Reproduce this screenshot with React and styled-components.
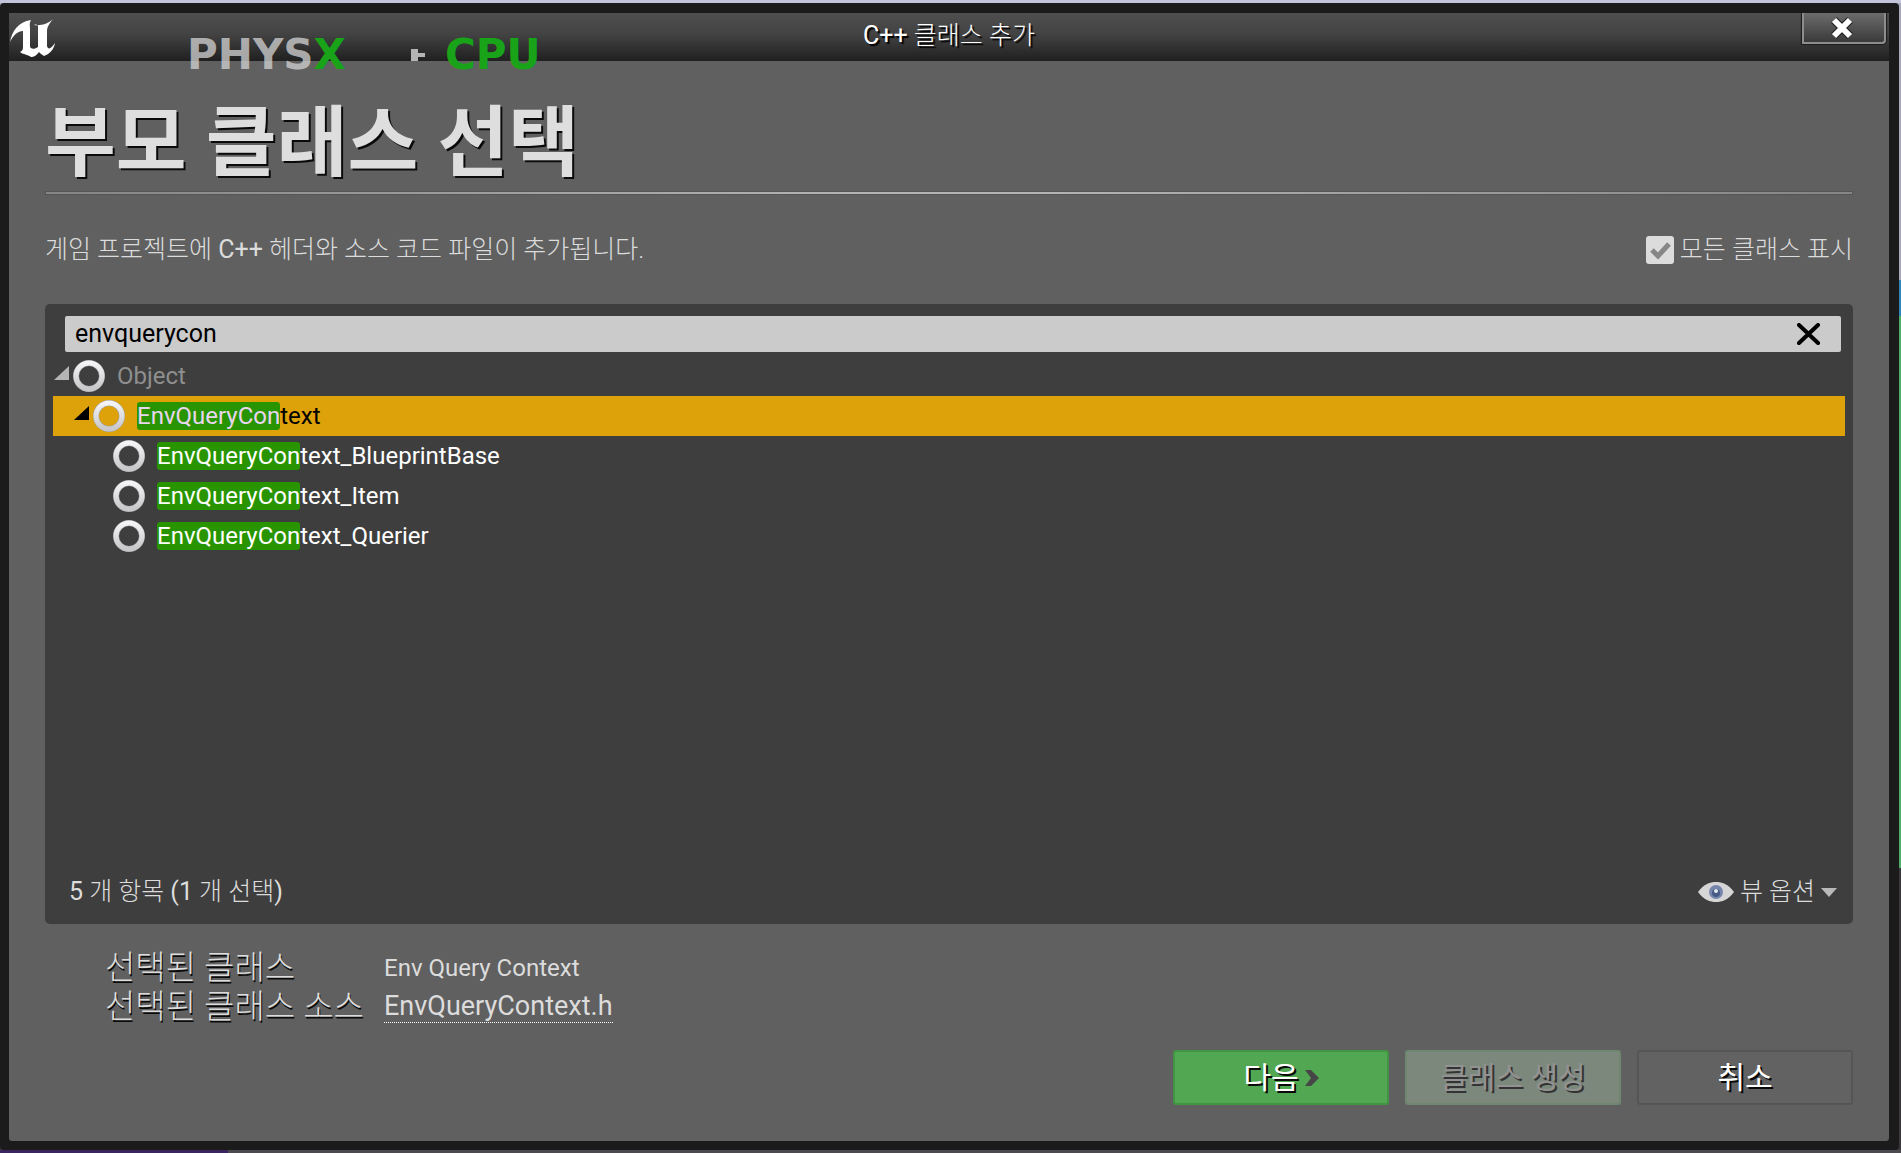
import React, { useState } from "react";
import styled, { createGlobalStyle, css } from "styled-components";

const GlobalStyle = createGlobalStyle`
  * {
    box-sizing: border-box;
  }
  body {
    margin: 0;
    background: #4a484c;
    color: #dcdcdc;
    font-family: Roboto, "Noto Sans CJK KR", sans-serif;
    font-size: 24px;
    font-weight: 400;
    line-height: 28px;
  }
  button, input {
    font: inherit;
    color: inherit;
  }
`;

const Desktop = styled.div`
  min-height: 100vh;
  display: flex;
  padding: 3px 2px 3px 0;
  background:
    linear-gradient(90deg, #3b2560 0 12%, #4c4a4e 12%) bottom / 100% 3px no-repeat,
    linear-gradient(#c3c3da 0 3px, #a9a9bc 3px 280px, #2f86b8 280px 316px, #4fae68 316px 868px, #3a383c 868px);
`;

const Frame = styled.div`
  flex: 1;
  display: flex;
  flex-direction: column;
  padding: 10px 10px 9px 9px;
  border-radius: 4px;
  background: #1b1b1b;
`;

const TitleBar = styled.header`
  height: 48px;
  display: grid;
  grid-template-columns: 1fr auto 1fr;
  background: linear-gradient(#4f4f4f, #424242 45%, #202020);
`;

const TitleText = styled.div`
  align-self: center;
  padding-bottom: 2px;
  color: #fff;
  font-size: 25px;
  font-weight: 300;
  text-shadow: 2px 2px 1px #000;
`;

/* latin runs read heavier than the light hangul around them */
const Latin = styled.span`
  font-weight: 400;
`;

const Logo = styled.svg`
  width: 48px;
  height: 48px;
`;

const CloseButton = styled.button`
  justify-self: end;
  display: flex;
  align-items: center;
  justify-content: center;
  width: 84px;
  height: 31px;
  margin-right: 3px;
  padding: 0 4px 0 0;
  border: 2px solid #8d8d8d;
  border-top: 0;
  border-radius: 0 0 4px 0;
  background: linear-gradient(#6c6c6c, #3a3a3a);
  box-shadow: 0 0 1px 1px #1c1c1c;
`;

/* renderer stats that float over the dialog */
const Overlay = styled.div`
  position: absolute;
  top: 31px;
  left: 187px;
  display: grid;
  grid-template-columns: 224px 34px auto;
  align-items: center;
  font: bold 42px/48px "DejaVu Sans", sans-serif;
  color: rgba(205, 205, 205, 0.8);
  pointer-events: none;
`;

const Green = styled.span`
  color: #18a318;
`;

const Content = styled.main`
  flex: 1;
  display: flex;
  flex-direction: column;
  padding: 36px;
  background: #606060;
  border-radius: 0 0 3px 3px;
`;

const Heading = styled.h1`
  margin: 0;
  font-size: 77px;
  font-weight: 700;
  line-height: 94px;
  color: #dedede;
  text-shadow: 2px 2px 0 #0a0a0a;
`;

const Rule = styled.hr`
  width: 100%;
  height: 4px;
  margin: 0;
  border: 1px solid #555;
  background: linear-gradient(90deg, #858585, #b4b4b4 45%, #b4b4b4 55%, #858585);
`;

const Intro = styled.div`
  display: flex;
  align-items: center;
  justify-content: space-between;
  height: 109px;
  font-size: 25px;
  font-weight: 300;
`;

const CheckLabel = styled.label`
  display: flex;
  align-items: center;
  gap: 6px;
`;

const CheckBox = styled.input`
  appearance: none;
  width: 28px;
  height: 28px;
  margin: 0;
  border-radius: 3px;
  background: #dcdcdc;
`;

const CheckWrap = styled.span`
  position: relative;
  display: flex;

  svg {
    position: absolute;
    inset: 0;
    pointer-events: none;
  }
`;

const Panel = styled.section`
  flex: 1;
  display: flex;
  flex-direction: column;
  padding: 12px 8px;
  border-radius: 5px;
  background: #3e3e3e;
`;

const SearchBar = styled.div`
  display: flex;
  align-items: center;
  height: 36px;
  margin: 0 4px 4px 12px;
  padding: 0 20px 0 10px;
  border-radius: 2px;
  background: #cbcbcb;
  color: #000;
  font-size: 25px;
`;

const SearchInput = styled.input`
  flex: 1;
  padding: 0;
  border: 0;
  outline: 0;
  background: none;
`;

const IconButton = styled.button`
  display: flex;
  align-items: center;
  padding: 0;
  border: 0;
  background: none;
`;

const Tree = styled.ul`
  flex: 1;
  margin: 0;
  padding: 0;
  list-style: none;
`;

const Row = styled.li`
  display: flex;
  align-items: center;
  height: 40px;
  padding-left: ${({ $depth }) => $depth * 20}px;
  color: ${({ $dim }) => ($dim ? "#8f8f8f" : "#fff")};

  ${({ $selected }) =>
    $selected &&
    css`
      background: #dda20a;
      color: #000;
    `}
`;

const Arrow = styled.svg`
  width: 20px;
  height: 20px;
  margin-bottom: 6px;
  fill: ${({ $dark }) => ($dark ? "#000" : "#b5b5b5")};
`;

const Mark = styled.mark`
  padding: 0;
  border-radius: 3px;
  background: #289400;
  color: ${({ $selected }) => ($selected ? "#e8d6f0" : "#fff")};
`;

const ClassName = styled.span`
  margin-left: 12px;
`;

const PanelFooter = styled.footer`
  display: flex;
  align-items: center;
  justify-content: space-between;
  height: 40px;
  padding: 0 8px 0 16px;
  font-size: 25px;
  font-weight: 300;
`;

const ViewButton = styled(IconButton)`
  gap: 6px;
`;

const Details = styled.dl`
  display: grid;
  grid-template-columns: 279px 1fr;
  grid-auto-rows: 39px;
  align-items: center;
  margin: 24px 0 24px 60px;
`;

const Term = styled.dt`
  font-size: 33px;
  font-weight: 300;
  line-height: 39px;
  text-shadow: 1px 2px 0 #0a0a0a;
`;

const Value = styled.dd`
  margin: 0;
`;

const SourceLink = styled.a`
  border-bottom: 1px dotted #fff;
  color: inherit;
  font-size: 27px;
  text-decoration: none;
`;

const Actions = styled.div`
  display: flex;
  justify-content: flex-end;
  gap: 16px;
`;

const ActionButton = styled.button`
  display: flex;
  align-items: center;
  justify-content: center;
  gap: 6px;
  width: 216px;
  height: 55px;
  padding: 0;
  border: 2px solid #555;
  border-radius: 3px;
  background: #626262;
  color: #fff;
  font-size: 30px;
  text-shadow: 2px 2px 0 #0a0a0a;

  ${({ $green }) =>
    $green &&
    css`
      border-color: #419443;
      background: #52a852;
    `}

  &:disabled {
    border-color: #6f8770;
    background: #7b887b;
    color: #929292;
    text-shadow: 2px 2px 0 #333;
  }
`;

const CLASSES = [
  { name: "Object", depth: 0, open: true, dim: true },
  { name: "EnvQueryContext", depth: 1, open: true },
  { name: "EnvQueryContext_BlueprintBase", depth: 2 },
  { name: "EnvQueryContext_Item", depth: 2 },
  { name: "EnvQueryContext_Querier", depth: 2 },
];

function Highlighted({ name, query, selected }) {
  const at = query ? name.toLowerCase().indexOf(query.toLowerCase()) : -1;
  if (at < 0) return name;
  const end = at + query.length;

  return (
    <>
      {name.slice(0, at)}
      <Mark $selected={selected}>{name.slice(at, end)}</Mark>
      {name.slice(end)}
    </>
  );
}

function Ring() {
  return (
    <svg width="32" height="32" viewBox="0 0 32 32">
      <defs>
        <linearGradient id="ring" x1="0" y1="0" x2="0" y2="1">
          <stop offset="0" stopColor="#f4f4f6" />
          <stop offset="1" stopColor="#c8c8ca" />
        </linearGradient>
      </defs>
      <circle cx="16" cy="16" r="13" fill="none" stroke="#a2a2a4" strokeWidth="6" />
      <circle cx="16" cy="16" r="13" fill="none" stroke="url(#ring)" strokeWidth="5" />
    </svg>
  );
}

function ClassRow({ item, query, selected, onSelect }) {
  return (
    <Row $depth={item.depth} $dim={item.dim} $selected={selected} onClick={onSelect}>
      <Arrow viewBox="0 0 20 20" $dark={selected}>
        {item.open && <path d="M1 17 16 3v14z" />}
      </Arrow>
      <Ring />
      <ClassName>
        <Highlighted name={item.name} query={query} selected={selected} />
      </ClassName>
    </Row>
  );
}

function App() {
  const [query, setQuery] = useState("envquerycon");
  const [selected, setSelected] = useState("EnvQueryContext");
  const [showAll, setShowAll] = useState(true);

  return (
    <Desktop>
      <GlobalStyle />
      <Frame>
        <TitleBar>
          <Logo viewBox="0 0 48 48">
            <path
              fill="#fff"
              d="M1 29C3 18 9 9 22 7c-2 3-1 6-1 9v17c0 3 4 4 8 1V14c0-2-1-3-4-2 8 1 15-2 19-6-4 5-6 8-6 12v15c1 4 4 3 8-3-1 6-5 11-11 13-2-1-4-3-5-4-2 3-5 5-8 5-4-3-7-2-11-5 2-1 3-2 3-5V18C8 18 4 23 1 29z"
            />
          </Logo>
          <TitleText>
            <Latin>C++</Latin> 클래스 추가
          </TitleText>
          <CloseButton aria-label="닫기">
            <svg width="26" height="24" viewBox="0 0 26 24">
              <path d="M5 4l16 16M21 4 5 20" stroke="#1c1c1c" strokeWidth="8" />
              <path d="M5 4l16 16M21 4 5 20" stroke="#fff" strokeWidth="6" />
            </svg>
          </CloseButton>
        </TitleBar>
        <Content>
          <Heading>부모 클래스 선택</Heading>
          <Rule />
          <Intro>
            <span>
              게임 프로젝트에 <Latin>C++</Latin> 헤더와 소스 코드 파일이 추가됩니다.
            </span>
            <CheckLabel>
              <CheckWrap>
                <CheckBox type="checkbox" checked={showAll} onChange={(e) => setShowAll(e.target.checked)} />
                {showAll && (
                  <svg width="28" height="28" viewBox="0 0 28 28">
                    <path d="M6 14l6 6L23 8" fill="none" stroke="#868686" strokeWidth="5" />
                  </svg>
                )}
              </CheckWrap>
              모든 클래스 표시
            </CheckLabel>
          </Intro>
          <Panel>
            <SearchBar>
              <SearchInput
                type="text"
                aria-label="검색"
                value={query}
                onChange={(e) => setQuery(e.target.value)}
              />
              <IconButton aria-label="지우기" onClick={() => setQuery("")}>
                <svg width="24" height="22" viewBox="0 0 24 22">
                  <path d="M2 2l19 18M21 2 2 20" stroke="#000" strokeWidth="4" strokeLinecap="round" />
                </svg>
              </IconButton>
            </SearchBar>
            <Tree>
              {CLASSES.map((item) => (
                <ClassRow
                  key={item.name}
                  item={item}
                  query={query}
                  selected={selected === item.name}
                  onSelect={() => setSelected(item.name)}
                />
              ))}
            </Tree>
            <PanelFooter>
              <span>
                <Latin>5</Latin> 개 항목 <Latin>(1</Latin> 개 선택<Latin>)</Latin>
              </span>
              <ViewButton>
                <svg width="36" height="22" viewBox="0 0 36 22">
                  <path d="M0 11C6 3 12 1 18 1s12 2 18 10c-6 8-12 10-18 10S6 19 0 11z" fill="#d6d6d6" />
                  <circle cx="18" cy="11" r="7" fill="#7486ab" />
                  <circle cx="18" cy="12" r="4" fill="#465a86" />
                  <circle cx="18" cy="10" r="2" fill="#e4e8f0" />
                </svg>
                뷰 옵션
                <svg width="16" height="9" viewBox="0 0 16 9">
                  <path d="M0 0h16L8 9z" fill="#b9b9b9" />
                </svg>
              </ViewButton>
            </PanelFooter>
          </Panel>
          <Details>
            <Term>선택된 클래스</Term>
            <Value>Env Query Context</Value>
            <Term>선택된 클래스 소스</Term>
            <Value>
              <SourceLink href="#source">EnvQueryContext.h</SourceLink>
            </Value>
          </Details>
          <Actions>
            <ActionButton $green>
              다음
              <svg width="14" height="24" viewBox="0 0 14 24">
                <path d="M0 4h6l8 8-8 8H0l6-8z" fill="#464646" />
              </svg>
            </ActionButton>
            <ActionButton $green disabled>
              클래스 생성
            </ActionButton>
            <ActionButton>취소</ActionButton>
          </Actions>
        </Content>
      </Frame>
      <Overlay>
        <span>
          PHYS<Green>X</Green>
        </span>
        <svg width="14" height="12" viewBox="0 0 14 12">
          <path d="M0 0h7v4h7v4H7v4H0z" fill="#b4b4b4" />
        </svg>
        <Green>CPU</Green>
      </Overlay>
    </Desktop>
  );
}

export default App;
